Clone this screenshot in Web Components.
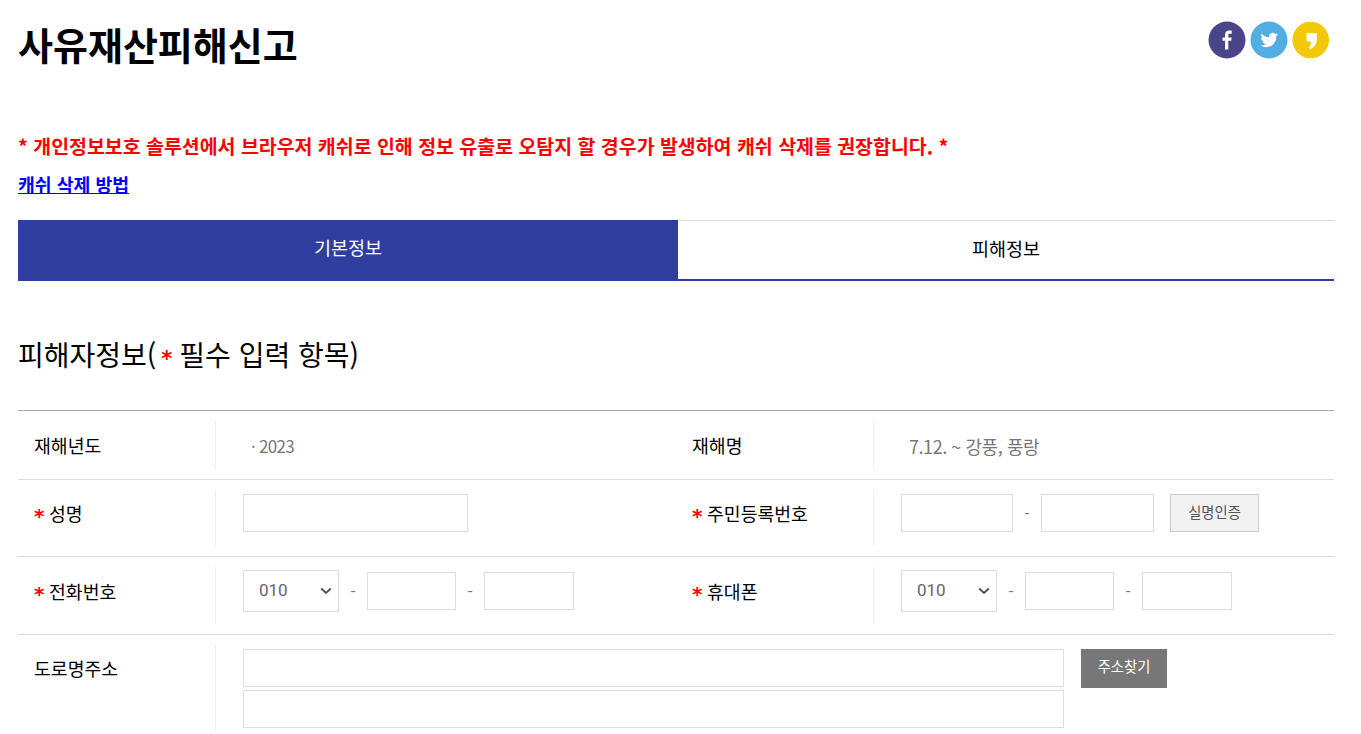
<!DOCTYPE html>
<html lang="ko">
<head>
<meta charset="utf-8">
<title>사유재산피해신고</title>
<style>
	html, body { margin: 0; background: #fff; }
	body { font-family: "Noto Sans CJK KR", "Noto Sans", sans-serif; color: #000; overflow: hidden; height: 734px; }
</style>
</head>
<body>
<report-page>
	<page-header title-text="사유재산피해신고"></page-header>
	<cache-notice></cache-notice>
	<form-tabs first="기본정보" second="피해정보"></form-tabs>
	<section-title></section-title>
	<form-table>
		<form-row style="--h:48px; --label-pb:0px; --value-pt:12px">
			<form-cell label="재해년도" style="--value-pl:35px"><span style="letter-spacing:-.7px">· 2023</span></form-cell>
			<form-cell label="재해명" style="--value-pl:35px"><span style="font-size:18px;letter-spacing:-.45px">7.12. ~ 강풍, 풍랑</span></form-cell>
		</form-row>
		<form-row style="--h:56px; --label-pb:10px; --value-pt:4px">
			<form-cell label="성명" required><text-box w="225"></text-box></form-cell>
			<form-cell label="주민등록번호" required>
				<text-box w="112"></text-box><dash-mark></dash-mark><text-box w="113"></text-box>
				<form-button kind="light" style="margin-left:16px">실명인증</form-button>
			</form-cell>
		</form-row>
		<form-row style="--h:57px; --label-pb:9px; --value-pt:3px">
			<form-cell label="전화번호" required>
				<phone-select w="96"></phone-select><dash-mark></dash-mark><text-box w="89"></text-box><dash-mark></dash-mark><text-box w="90"></text-box>
			</form-cell>
			<form-cell label="휴대폰" required>
				<phone-select w="96"></phone-select><dash-mark></dash-mark><text-box w="89"></text-box><dash-mark></dash-mark><text-box w="90"></text-box>
			</form-cell>
		</form-row>
		<form-row wide style="--h:85px; --value-pt:4px">
			<form-cell label="도로명주소" top>
				<address-fields></address-fields>
			</form-cell>
		</form-row>
	</form-table>
</report-page>

<script>
const BLUE = '#303e9f';

class ReportPage extends HTMLElement {
	constructor() {
		super();
		this.attachShadow({ mode: 'open' });
		this.shadowRoot.innerHTML = `
			<style>
				:host { display: block; padding: 0 27px 0 18px; }
			</style>
			<slot></slot>
		`;
	}
}

class PageHeader extends HTMLElement {
	constructor() {
		super();
		this.attachShadow({ mode: 'open' });
		this.shadowRoot.innerHTML = `
			<style>
				:host { display: flex; justify-content: space-between; align-items: flex-start; height: 130px; }
				h1 { margin: 17px 0 0; font-size: 38px; line-height: 54px; font-weight: 700; }
				.share { display: flex; gap: 4px; margin: 21px 4px 0 0; }
				svg { width: 38px; height: 38px; display: block; filter: blur(.35px); }
			</style>
			<h1>${this.getAttribute('title-text')}</h1>
			<div class="share">
				<svg viewBox="0 0 38 38"><circle cx="19" cy="19" r="18.5" fill="#4a4488"/><path fill="#fff" d="M20.300 28.500v-8.700h2.900l.4-3.400h-3.300v-2.100c0-1 .3-1.600 1.700-1.600h1.700V9.600c-.3 0-1.300-.1-2.500-.1-2.500 0-4.200 1.500-4.200 4.300v2.600h-2.500v3.400h2.500v8.700z"/></svg>
				<svg viewBox="0 0 38 38"><circle cx="19" cy="19" r="18.5" fill="#52ade3"/><path fill="#fff" transform="translate(19.300 18.700) scale(.8) translate(-19 -19)" d="M30 12.600c-.8.400-1.700.600-2.600.700.900-.600 1.600-1.400 2-2.500-.900.500-1.800.900-2.900 1.100a4.500 4.500 0 0 0-7.700 4.100c-3.700-.200-7-2-9.300-4.700-.400.700-.600 1.400-.600 2.200 0 1.600.800 3 2 3.800-.700 0-1.400-.200-2-.600v.100c0 2.200 1.500 4 3.600 4.400-.700.200-1.400.200-2 .100.600 1.800 2.200 3.100 4.200 3.100A9 9 0 0 1 8 26.300 12.700 12.700 0 0 0 14.900 28.300c8.300 0 12.800-6.900 12.800-12.800v-.600c.900-.600 1.600-1.400 2.300-2.300z"/></svg>
				<svg viewBox="0 0 38 38"><circle cx="18.700" cy="19" r="18.300" fill="#f2c900"/><path fill="#fff" d="M14.600 12h10.200v7c0 3.700-2.300 7-6.400 9.500l-1.600-1.700c1.500-1.900 2.300-3.900 2.500-6.300h-4.700z"/></svg>
			</div>
		`;
	}
}

class CacheNotice extends HTMLElement {
	constructor() {
		super();
		this.attachShadow({ mode: 'open' });
		this.shadowRoot.innerHTML = `
			<style>
				:host { display: block; font-weight: 700; height: 90px; }
				p { margin: 0; font-size: 19.460px; line-height: 32px; color: #f00; white-space: nowrap; }
				a { display: block; margin-top: 5px; font-size: 18.300px; line-height: 34px; color: #00f; text-decoration: underline; width: max-content; }
			</style>
			<p>* 개인정보보호 솔루션에서 브라우저 캐쉬로 인해 정보 유출로 오탐지 할 경우가 발생하여 캐쉬 삭제를 권장합니다. *</p>
			<a href="#">캐쉬 삭제 방법</a>
		`;
	}
}

class FormTabs extends HTMLElement {
	constructor() {
		super();
		this.attachShadow({ mode: 'open' });
		this.shadowRoot.innerHTML = `
			<style>
				:host { display: flex; height: 61px; font-size: 18.500px; }
				div { display: flex; align-items: center; justify-content: center; box-sizing: border-box; }
				.on { width: 660px; background: ${BLUE}; color: #fff; padding-bottom: 8px; }
				.off { flex: 1; border-top: 1px solid #ddd; border-bottom: 2px solid ${BLUE}; padding-bottom: 4px; }
			</style>
			<div class="on">${this.getAttribute('first')}</div>
			<div class="off">${this.getAttribute('second')}</div>
		`;
	}
}

class SectionTitle extends HTMLElement {
	constructor() {
		super();
		this.attachShadow({ mode: 'open' });
		this.shadowRoot.innerHTML = `
			<style>
				:host { display: block; height: 129px; box-sizing: border-box; padding-top: 54px; font-size: 28px; line-height: 38px; white-space: nowrap; }
				b { display: inline-block; width: 18px; margin-left: 5px; color: #f00; font: 700 21px "DejaVu Sans", sans-serif; }
			</style>
			피해자정보(<b>*</b>필수 입력 항목)
		`;
	}
}

class FormTable extends HTMLElement {
	constructor() {
		super();
		this.attachShadow({ mode: 'open' });
		this.shadowRoot.innerHTML = `
			<style>
				:host { display: block; border-top: 1px solid #aaa; }
			</style>
			<slot></slot>
		`;
	}
}

class FormRow extends HTMLElement {
	constructor() {
		super();
		this.attachShadow({ mode: 'open' });
		this.shadowRoot.innerHTML = `
			<style>
				:host { display: grid; grid-template-columns: 658px 1fr; border-bottom: 1px solid #ddd; padding: 10px 0; }
				:host([wide]) { grid-template-columns: 1fr; padding-bottom: 0; border: 0; }
			</style>
			<slot></slot>
		`;
	}
}

class FormCell extends HTMLElement {
	constructor() {
		super();
		this.attachShadow({ mode: 'open' });
		const star = this.hasAttribute('required') ? '<i>*</i>' : '';
		this.shadowRoot.innerHTML = `
			<style>
				:host { display: grid; grid-template-columns: 198px 1fr; font-size: 18.300px; }
				.label { display: flex; align-items: center; box-sizing: border-box; height: var(--h); padding: 0 0 var(--label-pb, 0) 16px; border-right: 1px solid #eee; }
				:host([top]) .label { align-items: flex-start; padding: 10px 0 0 16px; }
				i { flex: none; width: 15px; color: #f00; font: 700 20px "DejaVu Sans", sans-serif; line-height: 1; margin-top: 6px; }
				.value { display: flex; align-items: center; align-self: start; padding: var(--value-pt, 0) 0 0 var(--value-pl, 27px); color: #777; font-size: 17px; }
			</style>
			<div class="label">${star}<span>${this.getAttribute('label')}</span></div>
			<div class="value"><slot></slot></div>
		`;
	}
}

class TextBox extends HTMLElement {
	constructor() {
		super();
		this.attachShadow({ mode: 'open' });
		this.shadowRoot.innerHTML = `
			<style>
				:host { display: block; flex: none; }
				input { display: block; box-sizing: border-box; height: 38px; width: ${this.getAttribute('w')}px; border: 1px solid #ddd; background: #fff; margin: 0; padding: 0 10px; outline: 0; }
			</style>
			<input type="text">
		`;
	}
}

class PhoneSelect extends HTMLElement {
	constructor() {
		super();
		this.attachShadow({ mode: 'open' });
		this.shadowRoot.innerHTML = `
			<style>
				:host { display: flex; flex: none; align-items: center; box-sizing: border-box; width: ${this.getAttribute('w')}px; height: 42px; border: 1px solid #ddd; padding: 0 6px 0 15px; justify-content: space-between; font: 17px Roboto, sans-serif; color: #666; }
				span { margin-bottom: 3px; }
				svg { width: 12px; height: 8px; margin-bottom: 1px; }
			</style>
			<span>010</span>
			<svg viewBox="0 0 12 8"><path d="M1.200 1.500 6 6l4.800-4.500" fill="none" stroke="#555" stroke-width="2"/></svg>
		`;
	}
}

class DashMark extends HTMLElement {
	constructor() {
		super();
		this.attachShadow({ mode: 'open' });
		this.shadowRoot.innerHTML = `
			<style>
				:host { display: block; flex: none; width: 28px; text-align: center; color: #777; font-size: 16px; }
			</style>
			-
		`;
	}
}

class FormButton extends HTMLElement {
	constructor() {
		super();
		this.attachShadow({ mode: 'open' });
		this.shadowRoot.innerHTML = `
			<style>
				:host { display: flex; flex: none; align-items: center; justify-content: center; box-sizing: border-box; height: 38px; width: 89px; font-size: 14.300px; padding-bottom: 4px; }
				:host([kind=light]) { background: #f1f1f1; border: 1px solid #ccc; color: #555; }
				:host([kind=dark]) { background: #777; color: #fff; width: 86px; height: 39px; padding-bottom: 6px; }
			</style>
			<slot></slot>
		`;
	}
}

class AddressFields extends HTMLElement {
	constructor() {
		super();
		this.attachShadow({ mode: 'open' });
		this.shadowRoot.innerHTML = `
			<style>
				:host { display: grid; grid-template-columns: 821px auto; column-gap: 17px; row-gap: 2px; justify-content: start; align-items: start; }
			</style>
			<text-box w="821"></text-box>
			<form-button kind="dark">주소찾기</form-button>
			<text-box w="821"></text-box>
		`;
	}
}

customElements.define('report-page', ReportPage);
customElements.define('page-header', PageHeader);
customElements.define('cache-notice', CacheNotice);
customElements.define('form-tabs', FormTabs);
customElements.define('section-title', SectionTitle);
customElements.define('form-table', FormTable);
customElements.define('form-row', FormRow);
customElements.define('form-cell', FormCell);
customElements.define('text-box', TextBox);
customElements.define('phone-select', PhoneSelect);
customElements.define('dash-mark', DashMark);
customElements.define('form-button', FormButton);
customElements.define('address-fields', AddressFields);
</script>
</body>
</html>
